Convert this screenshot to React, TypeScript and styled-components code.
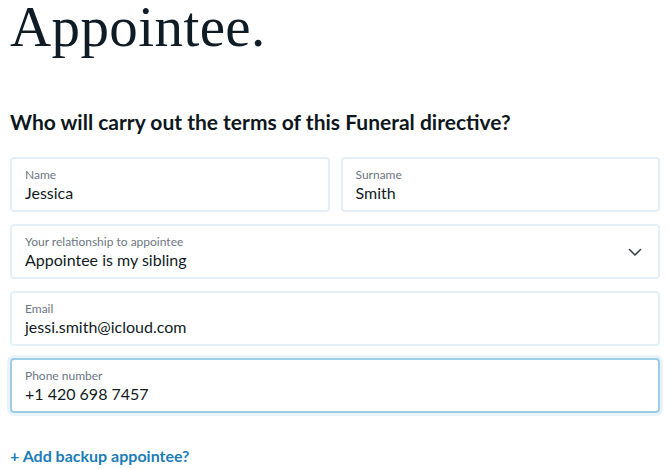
import React from "react";
import styled, { createGlobalStyle } from "styled-components";

const Global = createGlobalStyle`
  html, body { margin: 0; padding: 0; background: #ffffff; }
  body { font-family: Lato, "Open Sans", sans-serif; color: #0e1b26; }
`;

const Page = styled.div`
  padding: 0 9px 0 10px;
  display: flex;
  flex-direction: column;
`;

const Title = styled.h1`
  margin: -6px 0 0 0;
  font-family: "Liberation Serif", "DejaVu Serif", serif;
  font-weight: 400;
  font-size: 57px;
  line-height: 66px;
  color: #0f1c26;
  letter-spacing: 0.4px;
`;

const Question = styled.h2`
  margin: 49px 0 0 0;
  font-family: Lato, sans-serif;
  font-weight: 700;
  font-size: 21px;
  line-height: 26px;
  color: #0e1720;
`;

const Form = styled.div`
  margin-top: 22px;
  display: flex;
  flex-direction: column;
  gap: 12px;
`;

const Row = styled.div`
  display: grid;
  grid-template-columns: 1fr 1fr;
  gap: 11px;
`;

const Field = styled.div<{ $focused?: boolean }>`
  position: relative;
  box-sizing: border-box;
  height: 55px;
  border: 2px solid ${(p) => (p.$focused ? "#9dcde5" : "#e4f0f8")};
  border-radius: 4px;
  box-shadow: ${(p) => (p.$focused ? "0 0 0 3px #e8f3fa" : "none")};
  padding: 9px 13px 0 13px;
  display: flex;
  align-items: center;
  justify-content: space-between;
`;

const FieldText = styled.div`
  display: flex;
  flex-direction: column;
  align-self: flex-start;
`;

const Label = styled.span`
  font-size: 12px;
  line-height: 14px;
  color: #6e7682;
`;

const Value = styled.span`
  font-size: 16px;
  line-height: 21px;
  color: #111b24;
`;

const Chevron = styled.svg`
  width: 14px;
  height: 14px;
  margin-right: 3px;
  margin-top: -8px;
`;

const AddLink = styled.a`
  margin-top: 33px;
  font-size: 16px;
  font-weight: 700;
  line-height: 20px;
  color: #1c7db8;
  text-decoration: none;
  cursor: pointer;
  align-self: flex-start;
`;

type InputProps = { label: string; value: string; focused?: boolean; select?: boolean };

const Input: React.FC<InputProps> = ({ label, value, focused, select }) => (
  <Field $focused={focused}>
    <FieldText>
      <Label>{label}</Label>
      <Value>{value}</Value>
    </FieldText>
    {select && (
      <Chevron viewBox="0 0 14 14" fill="none">
        <path d="M1.5 4.5 L7 10 L12.5 4.5" stroke="#3a3f45" strokeWidth="1.6" strokeLinecap="round" strokeLinejoin="round" />
      </Chevron>
    )}
  </Field>
);

export default function App() {
  return (
    <Page>
      <Global />
      <Title>Appointee.</Title>
      <Question>Who will carry out the terms of this Funeral directive?</Question>
      <Form>
        <Row>
          <Input label="Name" value="Jessica" />
          <Input label="Surname" value="Smith" />
        </Row>
        <Input label="Your relationship to appointee" value="Appointee is my sibling" select />
        <Input label="Email" value="jessi.smith@icloud.com" />
        <Input label="Phone number" value="+1 420 698 7457" focused />
      </Form>
      <AddLink>+ Add backup appointee?</AddLink>
    </Page>
  );
}
